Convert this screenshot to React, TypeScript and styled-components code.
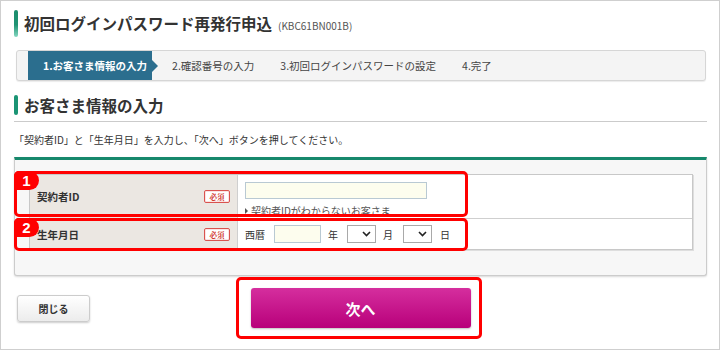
import React from "react";
import styled, { createGlobalStyle } from "styled-components";

const GlobalStyle = createGlobalStyle`
  html, body { margin: 0; padding: 0; background: #fff; }
  body { font-family: "Noto Sans CJK JP", "Noto Sans", sans-serif; color: #333; }
  * { box-sizing: border-box; }
`;

const Frame = styled.div`
  position: relative;
  width: 720px;
  height: 350px;
  border: 1px solid #cfcfcf;
  padding: 9px 12px 0 13px;
  display: flex;
  flex-direction: column;
  overflow: hidden;
  background: #fff;
`;

const TitleRow = styled.div`
  display: flex;
  align-items: stretch;
  gap: 6px;
  height: 27px;
`;

const TitleBar = styled.span`
  width: 4px;
  border-radius: 2px;
  background: linear-gradient(to bottom, #1b8d6d 0%, #1f9373 55%, #86d8c2 100%);
`;

const TitleTexts = styled.div`
  display: flex;
  align-items: baseline;
  padding-top: 3px;
  gap: 6px;
`;

const TitleText = styled.h1`
  margin: 0;
  font-size: 15.5px;
  font-weight: 700;
  color: #333;
  line-height: 20px;
`;

const TitleCode = styled.span`
  font-size: 10px;
  color: #555;
`;

const StepBar = styled.ol`
  list-style: none;
  margin: 13px 1px 0 2px;
  padding: 0 0 0 11px;
  height: 31px;
  display: flex;
  align-items: stretch;
  border: 1px solid #d6d6d6;
  border-radius: 3px;
  background: #f4f4f4;
  box-shadow: 0 1px 1px rgba(0, 0, 0, 0.08);
`;

const Step = styled.li<{ $active?: boolean }>`
  position: relative;
  display: flex;
  align-items: center;
  font-size: 10.5px;
  white-space: nowrap;
  color: ${(p) => (p.$active ? "#fff" : "#444")};
  font-weight: ${(p) => (p.$active ? 700 : 400)};
  background: ${(p) => (p.$active ? "#2b6e8e" : "transparent")};
  padding: ${(p) => (p.$active ? "0 5px 0 15px" : "0")};
  margin-right: ${(p) => (p.$active ? "20px" : "26px")};

  ${(p) =>
    p.$active &&
    `
    &::after {
      content: "";
      position: absolute;
      right: -6px;
      top: 50%;
      margin-top: -6px;
      border-left: 6px solid #2b6e8e;
      border-top: 6px solid transparent;
      border-bottom: 6px solid transparent;
    }
  `}
`;

const Heading = styled.div`
  margin-top: 14px;
  display: flex;
  align-items: center;
  gap: 6px;
  padding-bottom: 6px;
  border-bottom: 1px solid #cbcbcb;
`;

const HeadingBar = styled.span`
  width: 4px;
  height: 20px;
  border-radius: 2px;
  background: #1a9474;
`;

const HeadingText = styled.h2`
  margin: 0;
  font-size: 15.5px;
  font-weight: 700;
  line-height: 20px;
  color: #333;
`;

const Instruction = styled.p`
  margin: 10px 0 0;
  font-size: 10px;
  line-height: 16px;
  color: #333;
`;

const FormPanel = styled.div`
  margin-top: 9px;
  border: 1px solid #cccccc;
  border-top: 3px solid #16886c;
  background: #f7f7f7;
  padding: 14px 13px 25px 14px;
  border-radius: 0 0 3px 3px;
  box-shadow: 0 1px 2px rgba(0, 0, 0, 0.15);
`;

const FormTable = styled.div`
  border: 1px solid #c8c8c8;
  background: #fff;
  box-shadow: 1px 1px 0 #dedede;
`;

const FormRow = styled.div<{ $h: number; $divider?: boolean }>`
  display: grid;
  grid-template-columns: 208px 1fr;
  height: ${(p) => p.$h}px;
  border-top: ${(p) => (p.$divider ? "1px solid #cfcfcf" : "none")};
`;

const LabelCell = styled.div`
  background: #ebe7e2;
  border-right: 1px solid #cfcfcf;
  display: flex;
  align-items: center;
  justify-content: space-between;
  padding: 0 7px;
  font-size: 10.5px;
  font-weight: 700;
  color: #333;
`;

const Required = styled.span`
  display: inline-flex;
  align-items: center;
  justify-content: center;
  width: 26px;
  height: 13px;
  border: 1px solid #d9534f;
  border-radius: 2px;
  background: #fff;
  color: #d0342c;
  font-family: "Noto Serif CJK JP", "Noto Sans CJK JP", serif;
  font-size: 7.5px;
  font-weight: 700;
  box-shadow: inset 0 0 0 1px #fbe3e3;
`;

const ValueStack = styled.div`
  display: flex;
  flex-direction: column;
  align-items: flex-start;
  padding: 7px 7px 0;
`;

const ValueLine = styled.div`
  display: flex;
  align-items: center;
  padding: 0 7px;
  font-size: 10px;
  color: #333;
`;

const TextInput = styled.input<{ $w: number; $h: number; $ml?: number }>`
  width: ${(p) => p.$w}px;
  height: ${(p) => p.$h}px;
  margin: 0 0 0 ${(p) => p.$ml ?? 0}px;
  border: 1px solid #b9c9d3;
  background: #fdfdee;
  padding: 0 4px;
  font: inherit;
  outline: none;
`;

const HelpLink = styled.a`
  margin-top: 6px;
  display: flex;
  align-items: center;
  gap: 3px;
  font-size: 10px;
  line-height: 12px;
  color: #555;
  text-decoration: none;
`;

const LinkArrow = styled.span`
  width: 0;
  height: 0;
  border-left: 3px solid #555;
  border-top: 3px solid transparent;
  border-bottom: 3px solid transparent;
`;

const Unit = styled.span<{ $ml: number }>`
  margin-left: ${(p) => p.$ml}px;
`;

const SelectBox = styled.span<{ $ml: number }>`
  margin-left: ${(p) => p.$ml}px;
  width: 29px;
  height: 18px;
  border: 1px solid #a9a9a9;
  background: #fff;
  display: flex;
  align-items: center;
  justify-content: flex-end;
  padding-right: 4px;
`;

const Annot = styled.div<{ $l: number; $t: number; $w: number; $h: number }>`
  position: absolute;
  left: ${(p) => p.$l}px;
  top: ${(p) => p.$t}px;
  width: ${(p) => p.$w}px;
  height: ${(p) => p.$h}px;
  border: 3px solid #ff0000;
  border-radius: 5px;
  pointer-events: none;
`;

const AnnotBadge = styled.span`
  position: absolute;
  left: -3px;
  top: -3px;
  width: 25px;
  height: 19px;
  background: #ff0000;
  border-radius: 5px 10px 10px 0;
  color: #fff;
  font-family: "Liberation Sans", Arial, sans-serif;
  font-weight: 700;
  font-size: 15px;
  display: flex;
  align-items: center;
  justify-content: center;
`;

const ButtonRow = styled.div`
  margin-top: 12px;
  display: grid;
  grid-template-columns: 1fr 220px 1fr;
  align-items: center;
`;

const CloseButton = styled.button`
  margin-left: 3px;
  width: 73px;
  height: 27px;
  border: 1px solid #cccccc;
  border-radius: 3px;
  background: linear-gradient(to bottom, #ffffff, #ececec);
  box-shadow: 0 1px 2px rgba(0, 0, 0, 0.2);
  font-family: inherit;
  font-size: 10px;
  font-weight: 700;
  color: #333;
  padding: 0;
`;

const NextButton = styled.button`
  width: 220px;
  height: 40px;
  border: none;
  border-radius: 3px;
  background: linear-gradient(to bottom, #d52e9e, #b8007a);
  box-shadow: 0 1px 2px rgba(0, 0, 0, 0.25);
  font-family: inherit;
  font-size: 15px;
  font-weight: 700;
  color: #fff;
  padding: 0;
`;

const Chevron = () => (
  <svg width="9" height="6" viewBox="0 0 9 6">
    <polyline points="1,1 4.5,4.5 8,1" fill="none" stroke="#222" strokeWidth="1.6" />
  </svg>
);

export default function App() {
  return (
    <>
      <GlobalStyle />
      <Frame>
        <TitleRow>
          <TitleBar />
          <TitleTexts>
            <TitleText>初回ログインパスワード再発行申込</TitleText>
            <TitleCode>(KBC61BN001B)</TitleCode>
          </TitleTexts>
        </TitleRow>

        <StepBar>
          <Step $active>1.お客さま情報の入力</Step>
          <Step>2.確認番号の入力</Step>
          <Step>3.初回ログインパスワードの設定</Step>
          <Step>4.完了</Step>
        </StepBar>

        <Heading>
          <HeadingBar />
          <HeadingText>お客さま情報の入力</HeadingText>
        </Heading>

        <Instruction>「契約者ID」と「生年月日」を入力し、「次へ」ボタンを押してください。</Instruction>

        <FormPanel>
          <FormTable>
            <FormRow $h={43}>
              <LabelCell>
                契約者ID
                <Required>必須</Required>
              </LabelCell>
              <ValueStack>
                <TextInput $w={182} $h={17} />
                <HelpLink>
                  <LinkArrow />
                  契約者IDがわからないお客さま
                </HelpLink>
              </ValueStack>
            </FormRow>
            <FormRow $h={31} $divider>
              <LabelCell>
                生年月日
                <Required>必須</Required>
              </LabelCell>
              <ValueLine>
                <span>西暦</span>
                <TextInput $w={47} $h={18} $ml={9} />
                <Unit $ml={7}>年</Unit>
                <SelectBox $ml={9}>
                  <Chevron />
                </SelectBox>
                <Unit $ml={7}>月</Unit>
                <SelectBox $ml={10}>
                  <Chevron />
                </SelectBox>
                <Unit $ml={8}>日</Unit>
              </ValueLine>
            </FormRow>
          </FormTable>
        </FormPanel>

        <ButtonRow>
          <div>
            <CloseButton>閉じる</CloseButton>
          </div>
          <NextButton>次へ</NextButton>
          <div />
        </ButtonRow>

        <Annot $l={13} $t={170} $w={454} $h={46}>
          <AnnotBadge>1</AnnotBadge>
        </Annot>
        <Annot $l={13} $t={217} $w={454} $h={33}>
          <AnnotBadge>2</AnnotBadge>
        </Annot>
        <Annot $l={235} $t={276} $w={246} $h={62} />
      </Frame>
    </>
  );
}
